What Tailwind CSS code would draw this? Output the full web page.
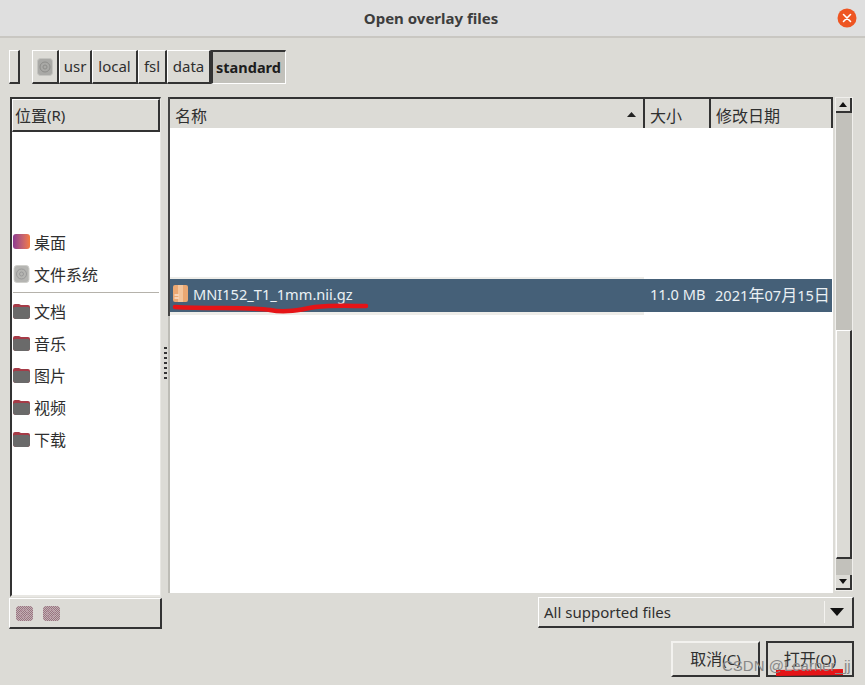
<!DOCTYPE html>
<html><head><meta charset="utf-8"><script src="https://cdn.jsdelivr.net/npm/@tailwindcss/browser@4"></script></head>
<body class="m-0">
<div class="relative w-[865px] h-[685px] overflow-hidden bg-[#dcdbd6] text-[#2f2f2f] text-[15px] font-['Noto_Sans','Noto_Sans_CJK_SC',sans-serif] flex flex-col">
  <!-- title bar -->
  <div class="h-[38px] shrink-0 bg-[#dfdfdf] border-b-2 border-[#c9c7c2] flex items-center justify-center relative">
    <span class="font-bold text-[15px] text-[#3d3d3d] ml-[-3px]">Open overlay files</span>
    <svg class="absolute left-[837px] top-[8px]" width="20" height="20" viewBox="0 0 20 20"><circle cx="10" cy="10" r="9.5" fill="#ee5522"/><path d="M6.5 6.5l7 7M13.5 6.5l-7 7" stroke="#fff" stroke-width="1.6" stroke-linecap="round"/></svg>
  </div>
  <!-- path bar -->
  <div class="h-[34px] mt-[12px] shrink-0 flex pl-[9px]">
    <div class="w-[11px] bg-[#dcdbd6] border-t border-l border-white border-r-2 border-b-2 border-r-[#333] border-b-[#333]"></div>
    <div class="ml-[12px] flex leading-none">
      <div class="w-[27px] flex items-center justify-center border-t border-l border-white border-r-2 border-b-2 border-r-[#333] border-b-[#333]">
        <svg width="16" height="18" viewBox="0 0 16 18"><rect x=".5" y=".5" width="15" height="17" rx="3" fill="#a9a9a6" stroke="#c4c4c0"/><circle cx="8" cy="9" r="5" fill="none" stroke="#8d8d8a"/><circle cx="8" cy="9" r="2" fill="none" stroke="#8d8d8a"/></svg>
      </div>
      <div class="w-[33px] flex items-center justify-center border-t border-l border-white border-r-2 border-b-2 border-r-[#333] border-b-[#333]">usr</div>
      <div class="w-[46px] flex items-center justify-center border-t border-l border-white border-r-2 border-b-2 border-r-[#333] border-b-[#333]">local</div>
      <div class="w-[29px] flex items-center justify-center border-t border-l border-white border-r-2 border-b-2 border-r-[#333] border-b-[#333]">fsl</div>
      <div class="w-[44px] flex items-center justify-center border-t border-l border-white border-r-2 border-b-2 border-r-[#333] border-b-[#333]">data</div>
      <div class="w-[75px] flex items-center justify-center font-bold text-[14.5px] text-[#1c1c1c] bg-[#c2c1bb] border-t-2 border-l-2 border-[#333] border-r border-b border-r-white border-b-white pr-[1px]">standard</div>
    </div>
  </div>
  <!-- panes -->
  <div class="flex mt-[13px] h-[532px] shrink-0 pl-[10px]">
    <!-- left -->
    <div class="w-[153px] shrink-0 flex flex-col">
      <div class="w-[151px] h-[500px] bg-white border-l-2 border-t-2 border-[#333] border-r border-r-[#e8e7e3] border-b-2 border-b-[#e8e7e3] flex flex-col">
        <div class="h-[33px] shrink-0 bg-[#dcdbd6] border-b-2 border-r-2 border-[#333] border-l border-t border-l-white border-t-white flex items-center pl-[2px] pt-[1px]"><span class="text-[16px]">位置</span><span>(R)</span></div>
        <div class="h-[95px] shrink-0"></div>
        <div class="h-[32px] flex items-center gap-[4px] pl-[1px] text-[16px]"><div class="w-[17px] h-[15px] mt-[-3px] rounded-[3px] bg-gradient-to-r from-[#8e3a8f] to-[#f47b3c]"></div>桌面</div>
        <div class="h-[32px] flex items-center gap-[4px] pl-[1px] text-[16px]"><svg class="mt-[-3px]" width="17" height="18" viewBox="0 0 16 18"><rect x=".5" y=".5" width="15" height="17" rx="3" fill="#b5b5b2" stroke="#d0d0cc"/><circle cx="8" cy="9" r="5" fill="none" stroke="#999"/><circle cx="8" cy="9" r="2" fill="none" stroke="#999"/></svg>文件系统</div>
        <div class="h-[1px] bg-[#b5b2ab] mx-[1px] mt-[1px] mb-[3px] shrink-0"></div>
        <div class="h-[32px] flex items-center gap-[4px] pl-[1px] text-[16px]"><svg class="mt-[-3px]" width="17" height="16" viewBox="0 0 17 16"><path d="M0 3a2 2 0 0 1 2-2h4l2 1h7a2 2 0 0 1 2 2v9a3 3 0 0 1-3 3H3a3 3 0 0 1-3-3z" fill="#a63b47"/><path d="M0 6a2 2 0 0 1 2-2h13a2 2 0 0 1 2 2v7a3 3 0 0 1-3 3H3a3 3 0 0 1-3-3z" fill="#6a6a6a"/></svg>文档</div>
        <div class="h-[32px] flex items-center gap-[4px] pl-[1px] text-[16px]"><svg class="mt-[-3px]" width="17" height="16" viewBox="0 0 17 16"><path d="M0 3a2 2 0 0 1 2-2h4l2 1h7a2 2 0 0 1 2 2v9a3 3 0 0 1-3 3H3a3 3 0 0 1-3-3z" fill="#a63b47"/><path d="M0 6a2 2 0 0 1 2-2h13a2 2 0 0 1 2 2v7a3 3 0 0 1-3 3H3a3 3 0 0 1-3-3z" fill="#6a6a6a"/></svg>音乐</div>
        <div class="h-[32px] flex items-center gap-[4px] pl-[1px] text-[16px]"><svg class="mt-[-3px]" width="17" height="16" viewBox="0 0 17 16"><path d="M0 3a2 2 0 0 1 2-2h4l2 1h7a2 2 0 0 1 2 2v9a3 3 0 0 1-3 3H3a3 3 0 0 1-3-3z" fill="#a63b47"/><path d="M0 6a2 2 0 0 1 2-2h13a2 2 0 0 1 2 2v7a3 3 0 0 1-3 3H3a3 3 0 0 1-3-3z" fill="#6a6a6a"/></svg>图片</div>
        <div class="h-[32px] flex items-center gap-[4px] pl-[1px] text-[16px]"><svg class="mt-[-3px]" width="17" height="16" viewBox="0 0 17 16"><path d="M0 3a2 2 0 0 1 2-2h4l2 1h7a2 2 0 0 1 2 2v9a3 3 0 0 1-3 3H3a3 3 0 0 1-3-3z" fill="#a63b47"/><path d="M0 6a2 2 0 0 1 2-2h13a2 2 0 0 1 2 2v7a3 3 0 0 1-3 3H3a3 3 0 0 1-3-3z" fill="#6a6a6a"/></svg>视频</div>
        <div class="h-[32px] flex items-center gap-[4px] pl-[1px] text-[16px]"><svg class="mt-[-3px]" width="17" height="16" viewBox="0 0 17 16"><path d="M0 3a2 2 0 0 1 2-2h4l2 1h7a2 2 0 0 1 2 2v9a3 3 0 0 1-3 3H3a3 3 0 0 1-3-3z" fill="#a63b47"/><path d="M0 6a2 2 0 0 1 2-2h13a2 2 0 0 1 2 2v7a3 3 0 0 1-3 3H3a3 3 0 0 1-3-3z" fill="#6a6a6a"/></svg>下载</div>
      </div>
      <div class="ml-[-1px] mt-[1px] w-[153px] h-[31px] border-t border-l border-white border-r-2 border-b-2 border-r-[#333] border-b-[#333] flex items-center gap-[10px] pl-[6px]">
        <svg width="17" height="15" viewBox="0 0 17 15"><defs><pattern id="d" width="2" height="2" patternUnits="userSpaceOnUse"><rect width="2" height="2" fill="#dcdbd6"/><rect width="1" height="1" fill="#8f6a77"/><rect x="1" y="1" width="1" height="1" fill="#8f6a77"/></pattern></defs><rect width="17" height="15" rx="4" fill="#a47f8b"/><rect width="17" height="15" rx="4" fill="url(#d)" opacity=".55"/><circle cx="8" cy="7.5" r="4" fill="none" stroke="#b89aa4"/></svg>
        <svg width="17" height="15" viewBox="0 0 17 15"><rect width="17" height="15" rx="4" fill="#a47f8b"/><rect width="17" height="15" rx="4" fill="url(#d)" opacity=".55"/><circle cx="8" cy="7.5" r="4" fill="none" stroke="#b89aa4"/></svg>
      </div>
    </div>
    <!-- gutter -->
    <div class="w-[5px] shrink-0 relative">
      <div class="absolute left-[1px] top-[250px] w-[3px] h-[33px] bg-[repeating-linear-gradient(to_bottom,#333_0,#333_2px,transparent_2px,transparent_5px)]"></div>
    </div>
    <!-- right -->
    <div class="w-[665px] h-[496px] shrink-0 flex">
      <div class="w-[2px] shrink-0 flex flex-col">
        <div class="h-[219px] shrink-0 bg-[#444]"></div>
        <div class="flex-1 bg-[#bdbcb6]"></div>
      </div>
      <div class="flex-1 flex flex-col bg-white border-t-2 border-[#333]">
        <div class="h-[29px] shrink-0 flex bg-[#dcdbd6]">
          <div class="w-[475px] border-r-2 border-[#333] flex items-center justify-between pl-[5px] pr-[7px] pt-[4px] text-[16px]">名称<svg width="9" height="5" viewBox="0 0 9 5" class="mt-[-3px]"><path d="M4.5 0L9 5H0z" fill="#222"/></svg></div>
          <div class="w-[66px] border-r-2 border-[#333] flex items-center pl-[5px] pt-[4px] text-[16px]">大小</div>
          <div class="w-[122px] border-r-2 border-[#333] flex items-center pl-[5px] pt-[4px] text-[16px]">修改日期</div>
        </div>
        <div class="h-[149px] shrink-0"></div>
        <div class="h-[2px] w-[474px] shrink-0 bg-[#eeede9]"></div>
        <div class="h-[33px] w-[662px] shrink-0 bg-[#456078] text-[#eaf0f4] text-[14.6px] flex items-center">
          <div class="w-[474px] shrink-0 flex items-center pl-[3px] gap-[5px]">
            <svg width="15" height="17" viewBox="0 0 15 17" class="mt-[-3px]"><rect width="15" height="17" rx="2" fill="#eaa873"/><rect x="5" width="5" height="17" fill="#f3c59c"/><path d="M1.5 10h4M1.5 13h4" stroke="#fff"/></svg>
            <span class="mt-[-2px]">MNI152_T1_1mm.nii.gz</span>
          </div>
          <div class="w-[66px] shrink-0 pl-[6px] mt-[-1px]">11.0 MB</div>
          <div class="pl-[5px] whitespace-nowrap mt-[-1px]">2021<span class="text-[16px]">年</span>07<span class="text-[16px]">月</span>15<span class="text-[16px]">日</span></div>
        </div>
        <div class="h-[3px] w-[474px] shrink-0 bg-[#eeede9]"></div>
      </div>
    </div>
    <!-- scrollbar -->
    <div class="w-[18px] h-[494px] ml-[2px] shrink-0 flex flex-col bg-[#c2c1bb] border border-[#f0efec]">
      <div class="h-[15px] shrink-0 bg-[#dcdbd6] border-r-2 border-b-2 border-[#333] flex items-center justify-center"><svg width="8" height="5" viewBox="0 0 8 5"><path d="M4 0L8 5H0z" fill="#111"/></svg></div>
      <div class="h-[217px] shrink-0"></div>
      <div class="h-[229px] shrink-0 bg-[#dcdbd6] border-t border-l border-white border-r-2 border-r-[#333] border-b-2 border-b-[#333]"></div>
      <div class="flex-1"></div>
      <div class="h-[15px] shrink-0 bg-[#dcdbd6] border-r-2 border-b-2 border-[#333] flex items-center justify-center"><svg width="8" height="5" viewBox="0 0 8 5"><path d="M4 5L8 0H0z" fill="#111"/></svg></div>
    </div>
  </div>
  <!-- footer controls -->
  <div class="absolute left-[538px] top-[597px] w-[316px] h-[31px] border-t border-l border-white border-r-2 border-b-2 border-r-[#333] border-b-[#333] flex items-center justify-between pl-[5px]">
    <span class="text-[15px]">All supported files</span>
    <div class="flex items-center h-[22px] border-l border-l-[#f4f3f0] pl-[5px] pr-[8px]"><svg width="14" height="8" viewBox="0 0 14 8"><path d="M7 8L14 0H0z" fill="#111"/></svg></div>
  </div>
  <div class="absolute left-[671px] top-[641px] flex gap-[6px]">
    <div class="w-[89px] h-[36px] border-t-2 border-l-2 border-[#f3f2ef] border-r-2 border-b-2 border-r-[#333] border-b-[#333] flex items-center justify-center"><span class="text-[16px]">取消</span>(C)</div>
    <div class="w-[88px] h-[36px] border-2 border-[#333] flex items-center justify-center"><span class="text-[16px]">打开</span>(O)</div>
  </div>
  <!-- annotations -->
  <svg class="absolute left-0 top-0 pointer-events-none" width="865" height="685" viewBox="0 0 865 685" fill="none">
    <path d="M175 307C210 309 250 307 270 310C285 313 300 310 315 307C335 305 350 306 366 306" stroke="#e51417" stroke-width="4.5" stroke-linecap="round"/>
    <path d="M776 673L843 672" stroke="#e51417" stroke-width="6"/>
  </svg>
  <div class="absolute left-[722px] top-[658px] text-[15px] leading-none text-[#888] whitespace-nowrap font-['Liberation_Sans',sans-serif]">CSDN @Learner_jj</div>
</div>
</body></html>
